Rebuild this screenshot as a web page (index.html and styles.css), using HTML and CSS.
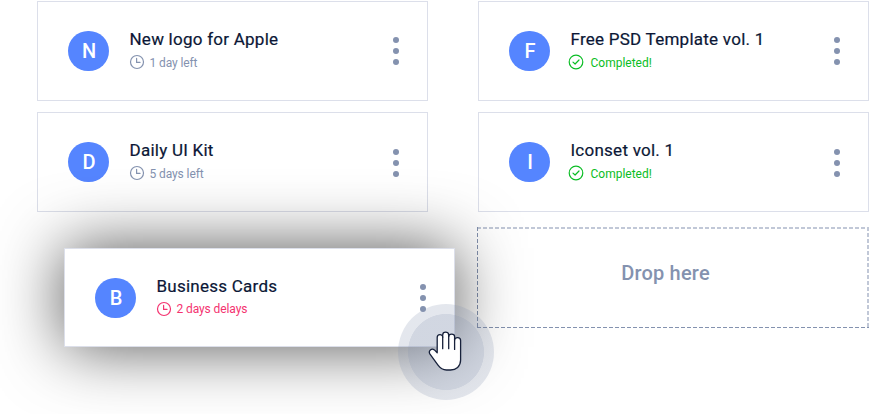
FILE: index.html
```html
<!DOCTYPE html>
<html lang="en">
<head>
<meta charset="utf-8">
<title>Task board</title>
<link rel="stylesheet" href="styles.css">
</head>
<body>
<svg class="sprite" aria-hidden="true">
  <symbol id="clock" viewBox="0 0 16 16"><circle cx="8" cy="8" r="6.5"/><path d="M7.6 4.4V8.4H11"/></symbol>
  <symbol id="check" viewBox="0 0 16 16"><circle cx="8" cy="8" r="6.8"/><path d="M5 8.1l2.1 1.9 3.9-4"/></symbol>
</svg>
<main class="board">
  <section class="column">
    <article class="card">
      <div class="avatar">N</div>
      <div class="info"><h3 class="title">New logo for Apple</h3><p class="status"><svg class="icon"><use href="#clock"/></svg><span>1 day left</span></p></div>
      <div class="menu"><i></i><i></i><i></i></div>
    </article>
    <article class="card">
      <div class="avatar">D</div>
      <div class="info"><h3 class="title">Daily UI Kit</h3><p class="status"><svg class="icon"><use href="#clock"/></svg><span>5 days left</span></p></div>
      <div class="menu low"><i></i><i></i><i></i></div>
    </article>
  </section>
  <section class="column">
    <article class="card">
      <div class="avatar">F</div>
      <div class="info"><h3 class="title">Free PSD Template vol. 1</h3><p class="status done"><svg class="icon"><use href="#check"/></svg><span>Completed!</span></p></div>
      <div class="menu"><i></i><i></i><i></i></div>
    </article>
    <article class="card">
      <div class="avatar">I</div>
      <div class="info"><h3 class="title">Iconset vol. 1</h3><p class="status done"><svg class="icon"><use href="#check"/></svg><span>Completed!</span></p></div>
      <div class="menu low"><i></i><i></i><i></i></div>
    </article>
    <div class="drop"><svg class="outline"><path class="soft" d="M0 1H392"/><path class="soft" d="M391 0V101"/><path d="M.5 0V101"/><path d="M0 100.5H392"/></svg><span>Drop here</span></div>
  </section>
</main>
<article class="card dragged">
  <div class="avatar">B</div>
  <div class="info"><h3 class="title">Business Cards</h3><p class="status late"><svg class="icon"><use href="#clock"/></svg><span>2 days delays</span></p></div>
  <div class="menu"><i></i><i></i><i></i></div>
</article>
<div class="pointer">
  <svg class="hand" viewBox="0 0 34 42"><path d="M9.2 22.7V7.5C9.2 3.8 14.7 3.8 14.7 7.2V4.9C14.7 1.3 20.7 1.3 20.7 4.9V6.6C20.7 3.2 26.6 3.2 26.6 6.6V10C26.6 6.8 32.6 6.8 32.6 10.5V30C32.6 36.5 28 40 22.5 40H18.5C14.7 40 12.2 38.2 10 35.2L2 24.1C-.2 20.5 3.8 17.9 6.4 19.9Z"/><path d="M14.7 7V18.7M20.7 6V18.7M26.6 9V19.4"/></svg>
</div>
</body>
</html>
```
FILE: styles.css
```css
* { box-sizing: border-box; }
body { margin: 0; width: 869px; height: 414px; position: relative; overflow: hidden; background: #fff; font-family: Roboto, "Liberation Sans", sans-serif; }
.sprite { position: absolute; width: 0; height: 0; }
.board { display: grid; grid-template-columns: 391px 391px; column-gap: 50px; padding: 1px 0 0 37px; }
.column { display: flex; flex-direction: column; gap: 11px; }
.card { display: flex; align-items: center; width: 391px; height: 100px; padding: 0 28px 0 30px; border: 1px solid #dcdfea; background: #fff; }
.avatar { flex: none; width: 40.4px; height: 40.4px; margin: .6px 0 0 .3px; padding-left: 1px; border-radius: 50%; background: #5585ff; color: #fff; font-size: 20px; font-weight: 500; line-height: 41px; text-align: center; }
.info { flex: 1; margin-left: 20.8px; padding-bottom: 3px; }
.title { margin: 0; color: #0b1736; font-size: 17px; font-weight: 400; line-height: 22px; letter-spacing: .25px; white-space: nowrap; -webkit-text-stroke: .2px #0b1736; }
.status { display: flex; align-items: center; gap: 5px; height: 18px; margin: 4px 0 0; color: #8492af; font-size: 12px; line-height: 18px; letter-spacing: -.1px; white-space: nowrap; }
.icon { width: 16px; height: 16px; margin: 0 -.5px 0 -.5px; fill: none; stroke: currentColor; stroke-width: 1.2; stroke-linecap: round; stroke-linejoin: round; }
.status .icon { margin-top: -1px; }
.done { color: #0bbd25; letter-spacing: 0; }
.status.done .icon { margin-left: -2.3px; margin-right: 1.3px; }
.late { color: #f43370; }
.menu { display: flex; flex-direction: column; gap: 5px; }
.low { padding-top: 2px; }
.menu i { width: 6px; height: 6px; border-radius: 50%; background: #8492af; }
.drop { position: relative; width: 392px; height: 101px; margin: 4px 0 0 -1px; display: flex; align-items: center; justify-content: center; padding: 0 15px 9px 0; color: #8492af; font-size: 20px; font-weight: 500; letter-spacing: .2px; }
.outline { position: absolute; inset: 0; width: 392px; height: 101px; fill: none; stroke: #8492af; stroke-width: 1; stroke-dasharray: 4 2; }
.outline .soft { stroke-width: 2; stroke: #c1c8d7; }
.dragged { position: absolute; left: 64px; top: 248px; height: 99px; padding-top: 1px; box-shadow: 0 0 66px rgba(0, 0, 0, .68); }
.dragged .info { padding-bottom: 4px; }
.dragged .title { margin-bottom: -1px; padding-top: 1px; }
.pointer { position: absolute; left: 398px; top: 304px; width: 96px; height: 96px; border-radius: 50%; background: radial-gradient(circle, rgba(132, 146, 175, .37) 37.7px, rgba(132, 146, 175, .22) 38.3px); }
.hand { position: absolute; left: 30px; top: 25.7px; width: 34px; height: 42px; fill: #fff; stroke: #17213b; stroke-width: 1.3; stroke-linecap: round; stroke-linejoin: round; }
```
